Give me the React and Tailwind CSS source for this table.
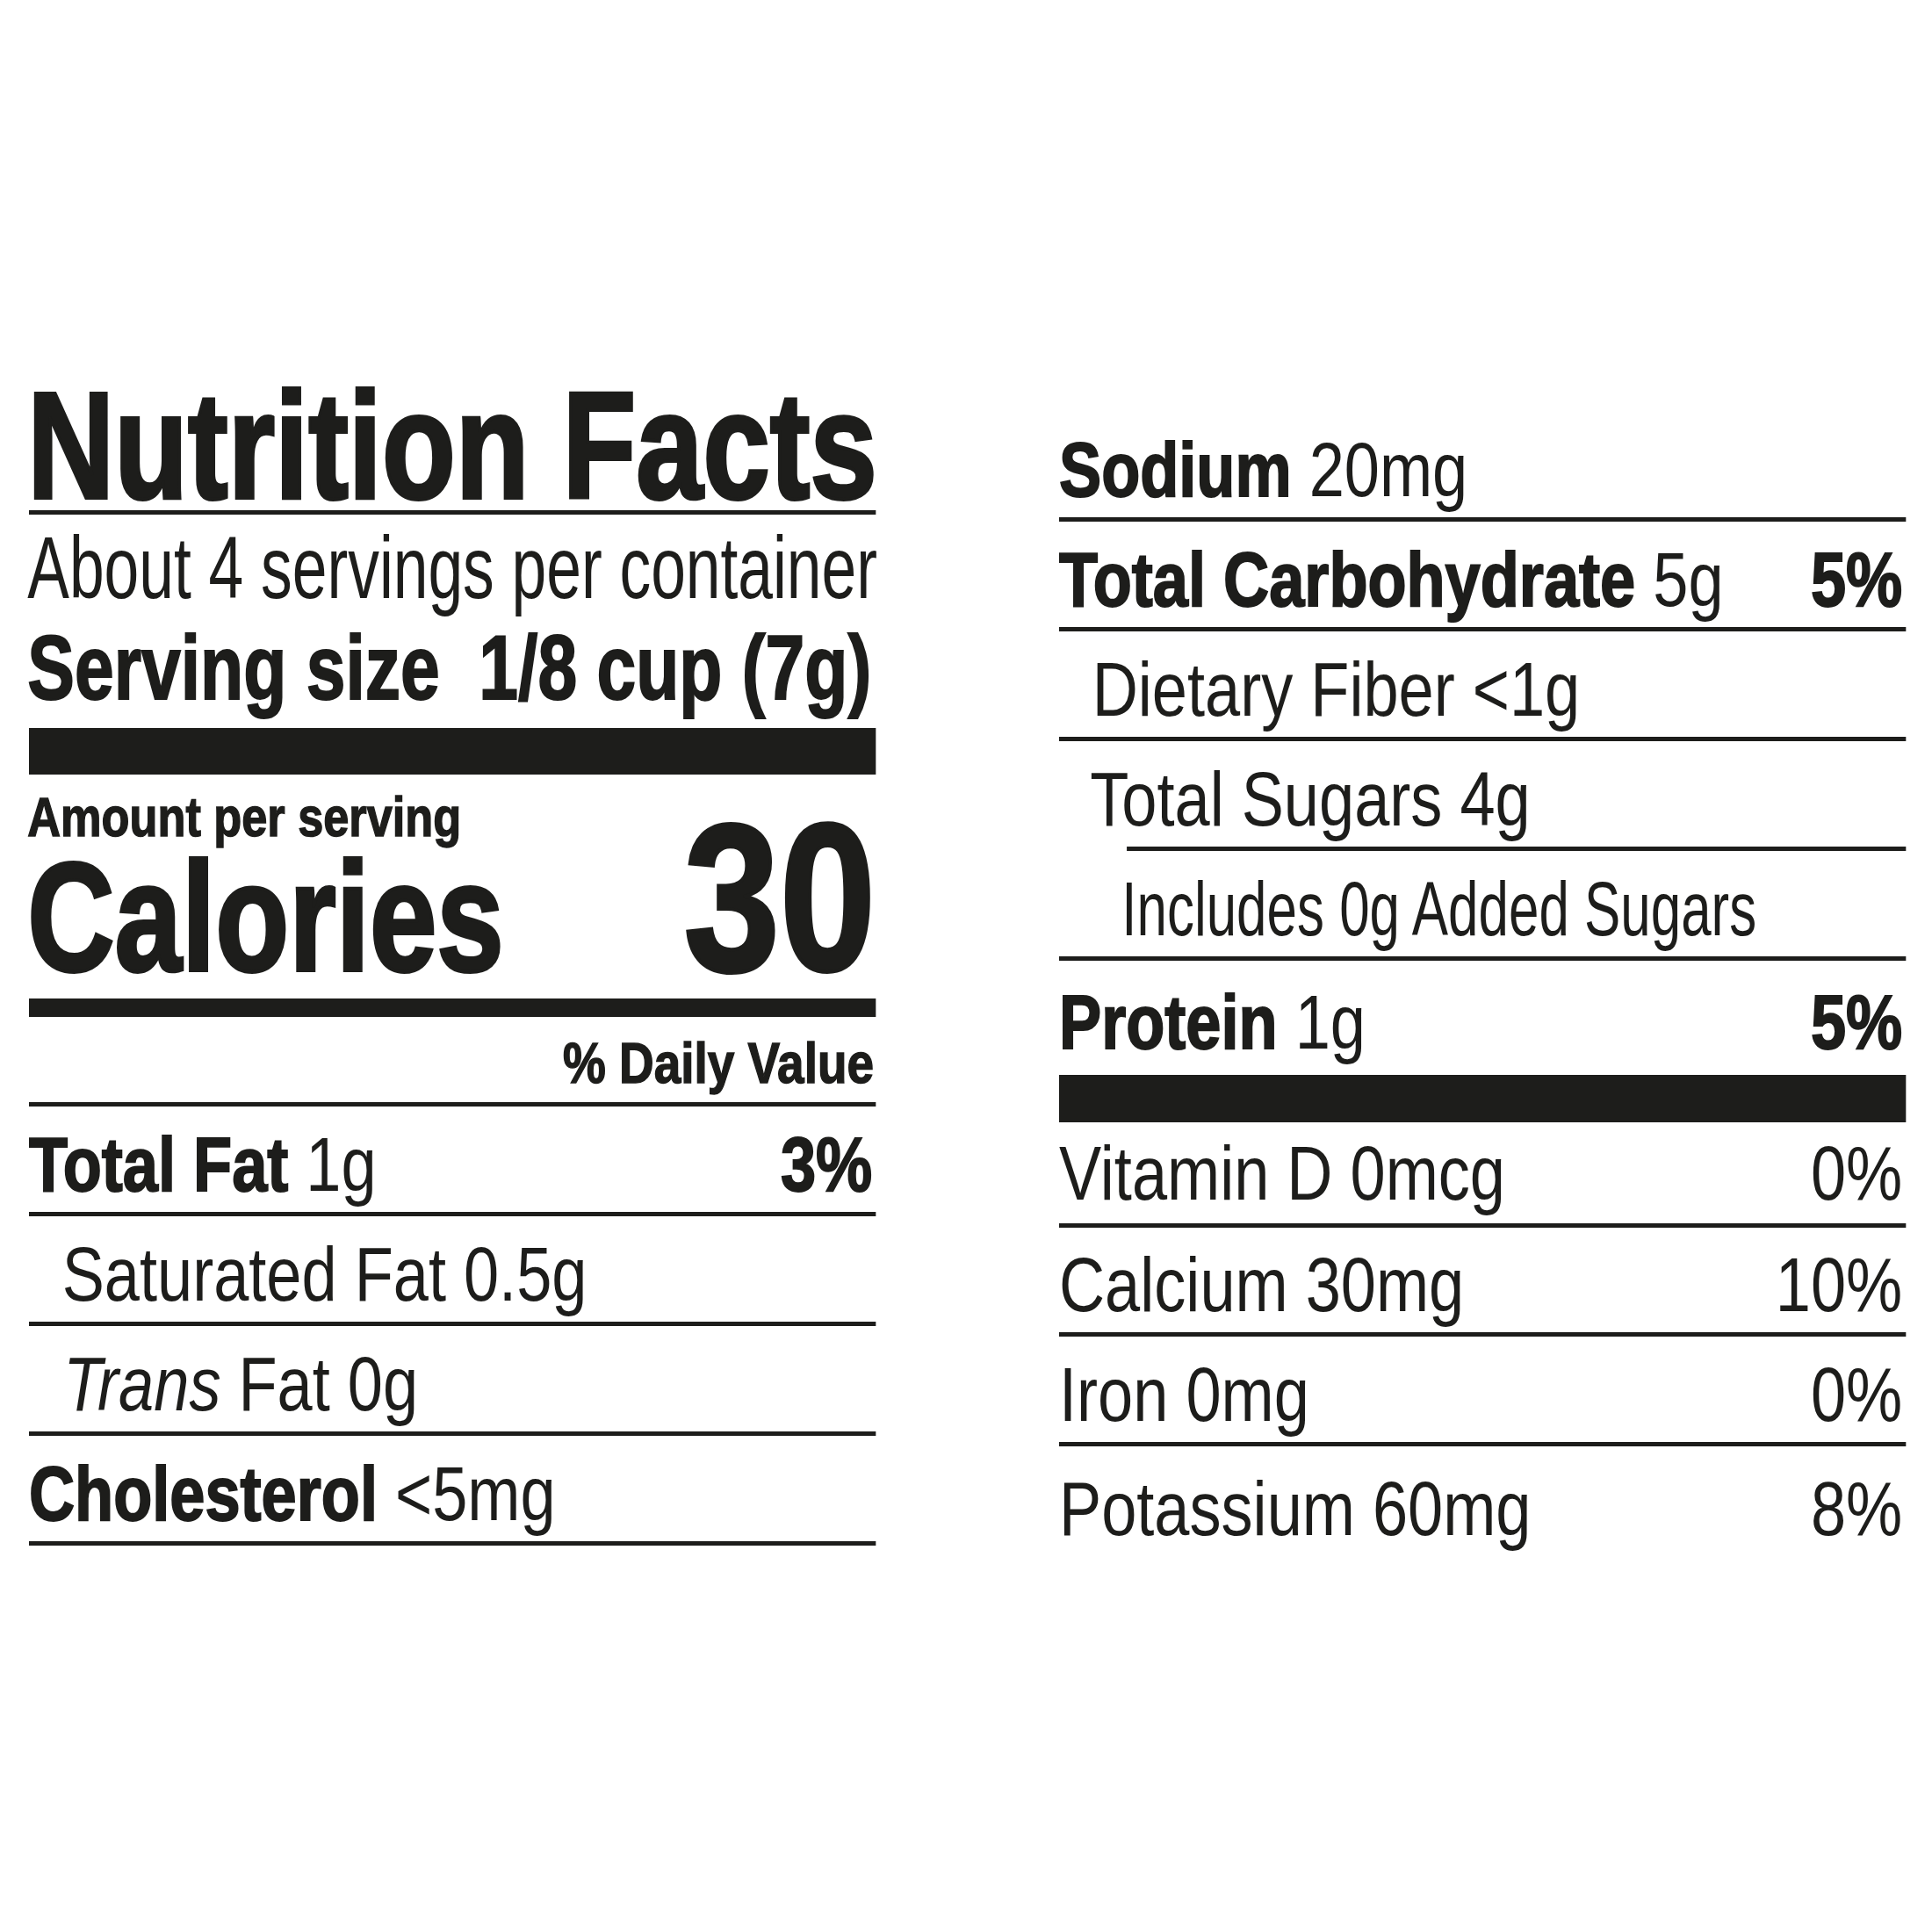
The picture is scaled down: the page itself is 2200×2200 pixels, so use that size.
const ink = 'text-[#1d1d1b]';

// Helvetica Condensed is not installed: the columns are drawn in Liberation Sans
// at 1/0.82 width and squeezed back with scale-x.
function Row({ children, value, rowClass = 'h-[125px] border-b-[5px]' }) {
  return (
    <div className={`flex items-end border-[#1d1d1b] pb-[10px] pr-[5px] ${rowClass}`}>
      <div className="min-w-0 flex-1 whitespace-nowrap">{children}</div>
      {value}
    </div>
  );
}

function Bold({ children }) {
  return <span className="font-bold [-webkit-text-stroke:2px_#1d1d1b]">{children}</span>;
}

export default function App() {
  return (
    <div className={`flex h-[2200px] w-[2200px] gap-[209px] bg-white pl-[33px] font-['Liberation_Sans',Arial,sans-serif] text-[88px] leading-none ${ink}`}>
      {/* left column */}
      <div className="w-[964px] min-w-0 shrink-0">
        <div className="flex w-[1176px] origin-left scale-x-[0.82] flex-col pt-[421px]">
          <div className="h-[165px] border-b-[5px] border-[#1d1d1b] pt-[12px] whitespace-nowrap">
            <h1 className="-ml-[2px] origin-left scale-x-[0.972] text-[172px] leading-[148px] font-bold [-webkit-text-stroke:4px_#1d1d1b]">Nutrition Facts</h1>
          </div>
          <div className="-ml-[2px] mt-[10px] origin-left scale-x-[0.870] whitespace-nowrap text-[100px]">About 4 servings per container</div>
          <div className="-ml-[2px] mt-[12px] origin-left scale-x-[0.943] whitespace-pre text-[104px] font-bold [-webkit-text-stroke:2px_#1d1d1b]">Serving size  1/8 cup (7g)</div>
          <div className="mt-[17px] h-[53px] bg-[#1d1d1b]" />
          <div className="mt-[16px] flex items-end justify-between">
            <div className="-ml-[2px] flex flex-col whitespace-nowrap font-bold">
              <span className="mt-[3px] origin-left scale-x-[1.012] text-[63px] leading-[58px] [-webkit-text-stroke:1.5px_#1d1d1b]">Amount per serving</span>
              <span className="origin-left scale-x-[0.947] text-[177px] leading-[170px] [-webkit-text-stroke:4px_#1d1d1b]">Calories</span>
            </div>
            <span className="-mb-[13px] text-[240px] font-bold [-webkit-text-stroke:4px_#1d1d1b]">30</span>
          </div>
          <div className="mt-[8px] h-[21px] bg-[#1d1d1b]" />
          <div className="mt-[20px] flex h-[82px] items-start justify-end border-b-[5px] border-[#1d1d1b] pr-[3px]">
            <span className="origin-right scale-x-[1.03] text-[65px] font-bold [-webkit-text-stroke:1.5px_#1d1d1b]">% Daily Value</span>
          </div>
          <Row value={<Bold>3%</Bold>}>
            <Bold>Total Fat</Bold> 1g
          </Row>
          <Row>
            <span className="pl-[46px]">Saturated Fat 0.5g</span>
          </Row>
          <Row>
            <span className="pl-[48px]">
              <i>Trans</i> Fat 0g
            </span>
          </Row>
          <Row>
            <Bold>Cholesterol</Bold> &lt;5mg
          </Row>
        </div>
      </div>

      {/* right column */}
      <div className="w-[964px] min-w-0 shrink-0">
        <div className="flex w-[1176px] origin-left scale-x-[0.82] flex-col pt-[469px]">
          <Row>
            <Bold>Sodium</Bold> 20mg
          </Row>
          <Row value={<Bold>5%</Bold>}>
            <Bold>Total Carbohydrate</Bold> 5g
          </Row>
          <Row>
            <span className="pl-[46px]">Dietary Fiber &lt;1g</span>
          </Row>
          <div className="flex flex-col">
            <Row rowClass="h-[120px]">
              <span className="pl-[43px]">Total Sugars 4g</span>
            </Row>
            <div className="ml-[94px] h-[5px] bg-[#1d1d1b]" />
          </div>
          <Row>
            <div className="pl-[87px]">
              <span className="inline-block origin-left scale-x-[0.858]">Includes 0g Added Sugars</span>
            </div>
          </Row>
          <Row value={<Bold>5%</Bold>} rowClass="h-[130px] pb-[16px]">
            <Bold>Protein</Bold> 1g
          </Row>
          <div className="h-[54px] bg-[#1d1d1b]" />
          <Row value={<span>0%</span>} rowClass="h-[120px] border-b-[5px] pb-[13px]">
            Vitamin D 0mcg
          </Row>
          <Row value={<span>10%</span>} rowClass="h-[124px] border-b-[5px]">
            Calcium 30mg
          </Row>
          <Row value={<span>0%</span>} rowClass="h-[125px] border-b-[5px]">
            Iron 0mg
          </Row>
          <Row value={<span>8%</span>} rowClass="h-[125px]">
            Potassium 60mg
          </Row>
        </div>
      </div>
    </div>
  );
}
